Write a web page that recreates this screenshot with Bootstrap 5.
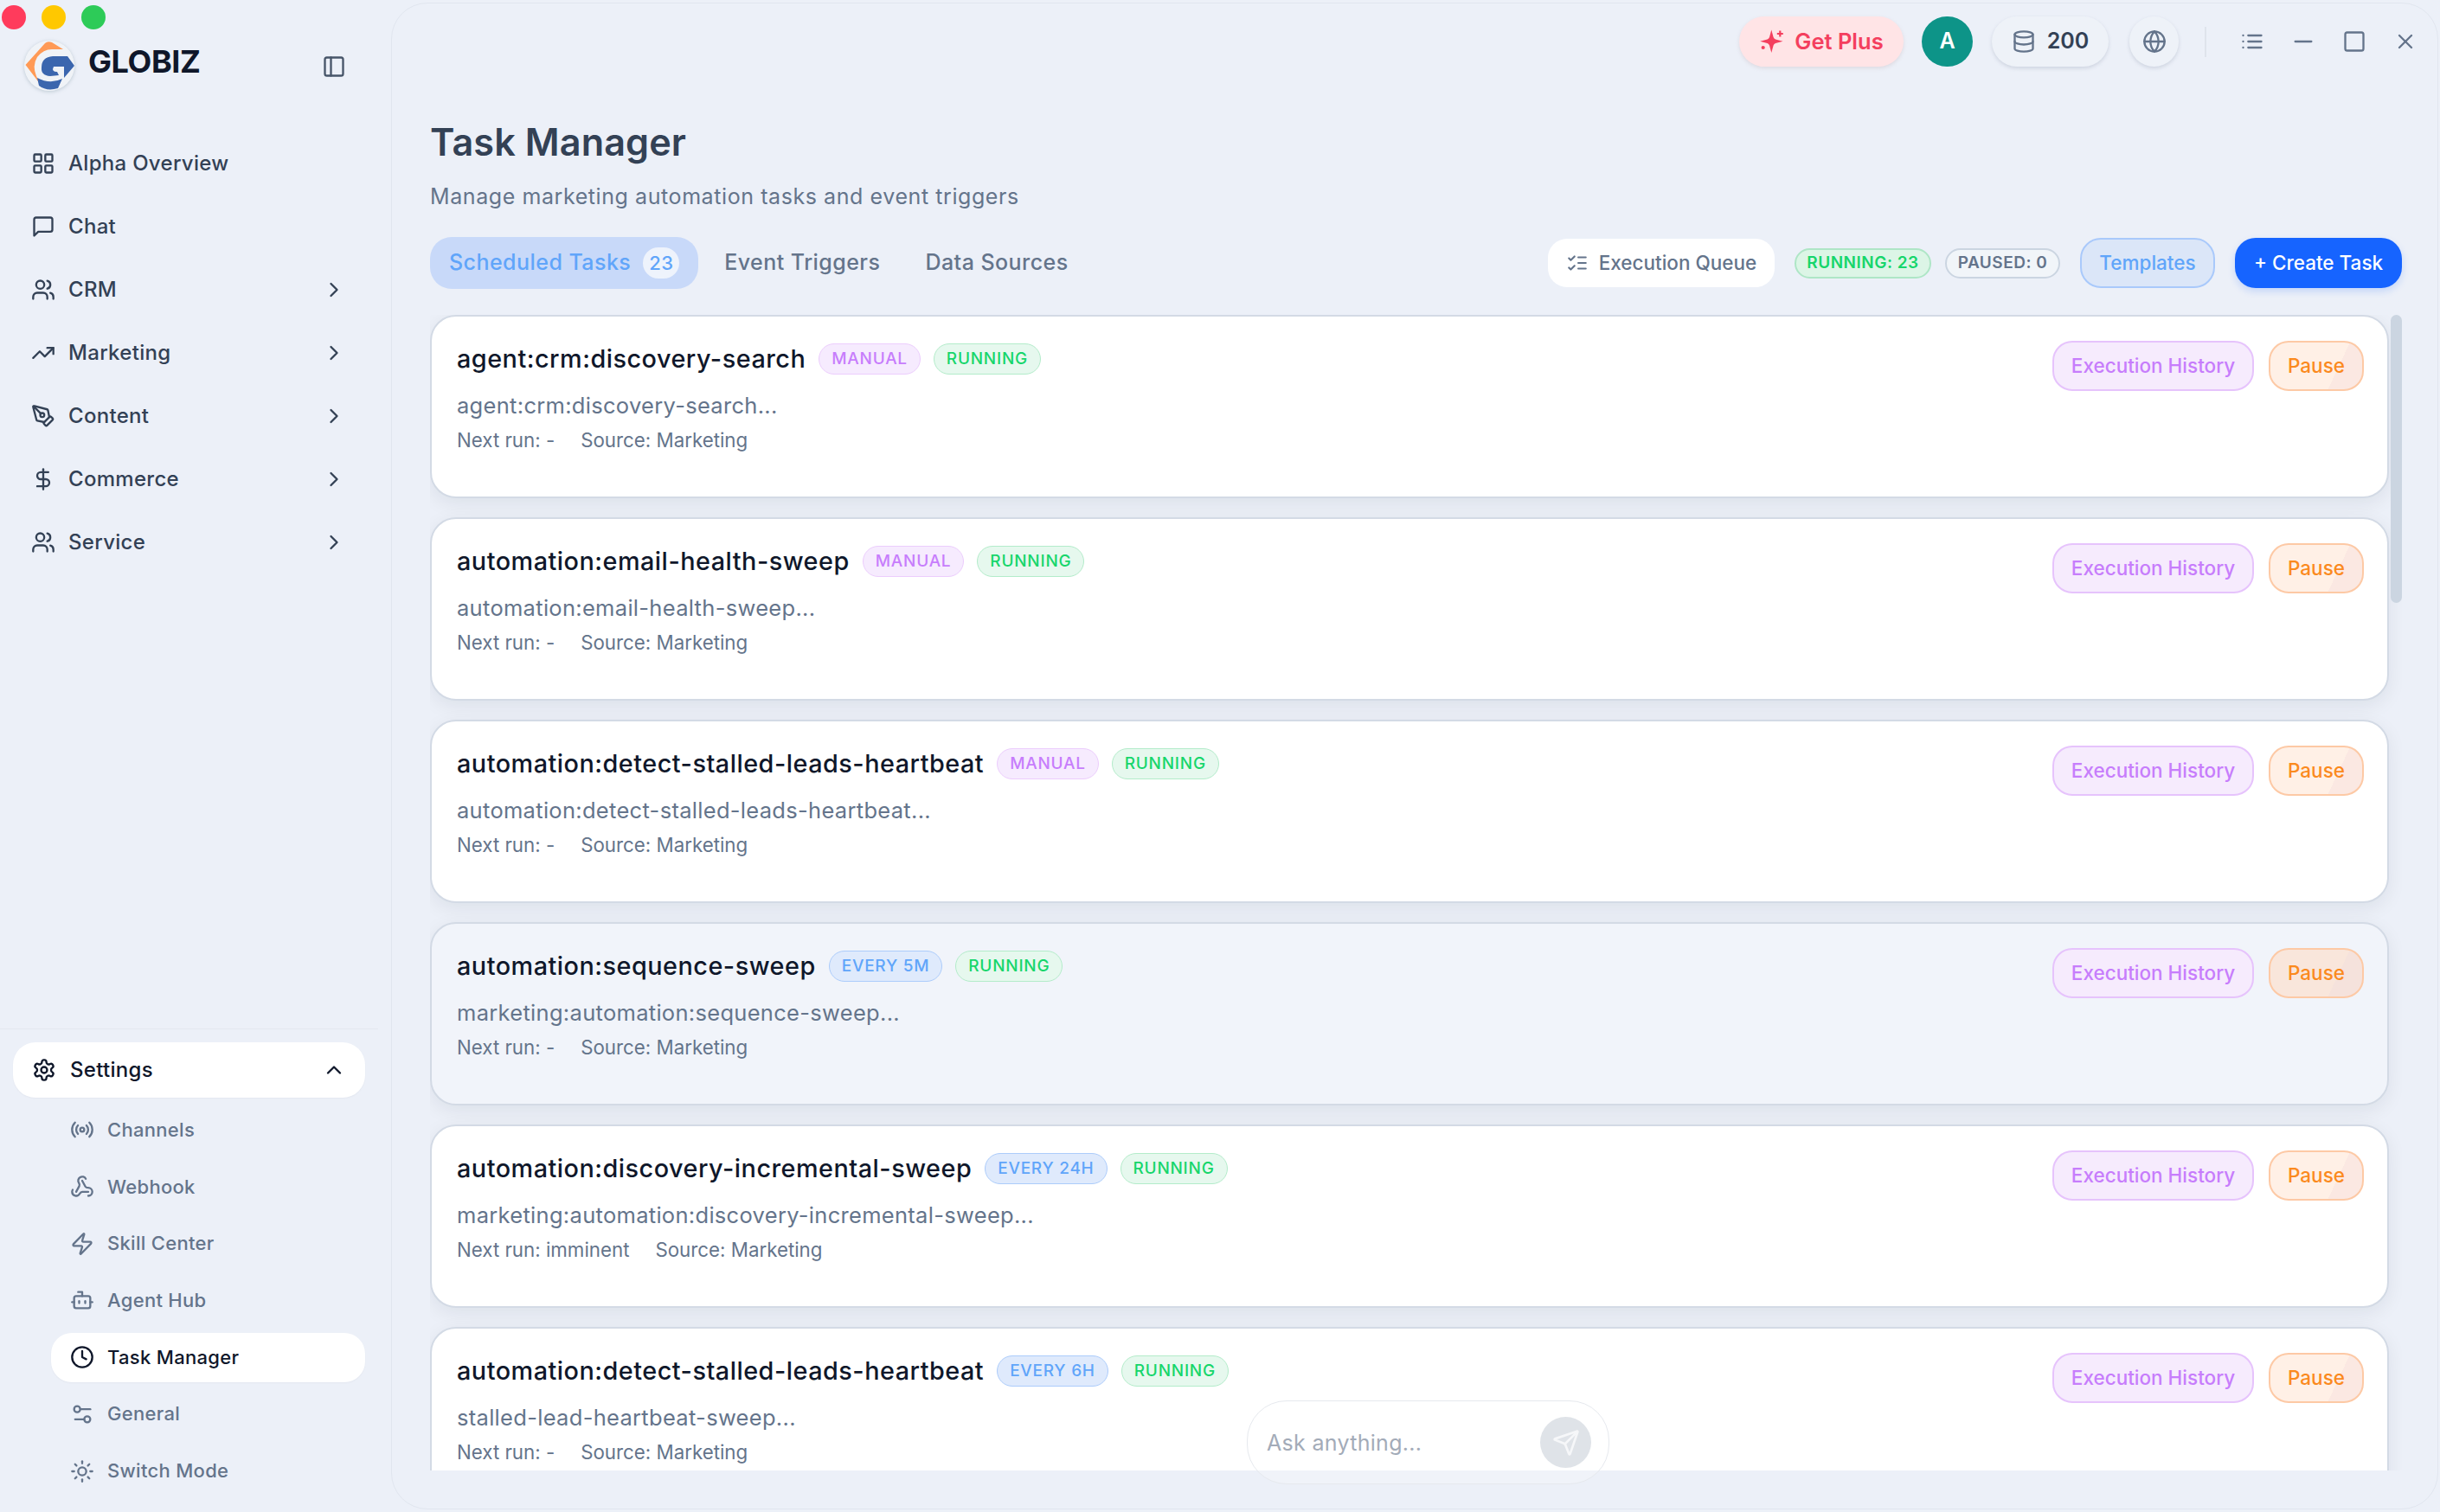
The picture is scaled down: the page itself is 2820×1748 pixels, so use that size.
<!DOCTYPE html>
<html lang="en">
<head>
  <meta charset="utf-8">
  <meta content="width=device-width, initial-scale=1.0" name="viewport">
  <title>GLOBIZ - Task Manager</title>
  <link href="https://cdn.jsdelivr.net/npm/bootstrap@5.3.3/dist/css/bootstrap.min.css" rel="stylesheet">
  <style>
    html, body { height: 100%; }
    body {
      font-family: Inter, "Liberation Sans", sans-serif;
      background-color: #ecf0f8;
      color: #0f172a;
      overflow: hidden;
    }
    svg.ico {
      width: 28px;
      height: 28px;
      flex: none;
      fill: none;
      stroke: currentColor;
      stroke-width: 2;
      stroke-linecap: round;
      stroke-linejoin: round;
    }
    .app-shell { height: 1748px; }

    /* sidebar */
    .side-col { width: 452px; flex: none; }
    .traffic { padding: 6px 0 0 2px; gap: 18px; height: 34px; }
    .traffic span { width: 28px; height: 28px; border-radius: 50%; }
    .brand-row { margin-top: 13px; padding: 0 52px 0 28px; height: 58px; }
    .brand-logo { width: 58px; height: 58px; flex: none; border-radius: 50%; box-shadow: 0 1px 4px rgba(100, 130, 140, .35); }
    .brand-name { font-size: 36px; font-weight: 700; letter-spacing: -0.4px; margin-left: 16px; margin-top: -10px; color: #0f172a; }
    .side-toggle { color: #475569; margin-left: auto; margin-top: 2px; }
    .main-nav { margin-top: 47px; }
    .main-nav a {
      height: 73px;
      padding: 0 52px 0 36px;
      gap: 15px;
      font-size: 24px;
      font-weight: 500;
      letter-spacing: 0.3px;
      color: #334155;
      text-decoration: none;
    }
    .main-nav a .ico + .ico { margin-left: auto; }
    .settings-box { border-top: 1px solid #e3e8f0; margin-right: 15px; padding-top: 15px; padding-bottom: 19px; }
    .settings-head {
      margin-left: 15px;
      margin-right: 15px;
      height: 64px;
      padding: 0 22px;
      gap: 16px;
      background: #fff;
      border-radius: 26px;
      font-size: 24px;
      font-weight: 500;
      letter-spacing: 0.3px;
      color: #0f172a;
      box-shadow: 0 1px 2px rgba(15, 23, 42, .04);
    }
    .settings-head .ico + .ico { margin-left: auto; }
    .sub-nav { margin: 8.7px 15px 0 59px; gap: 8.7px; }
    .sub-nav a {
      height: 57px;
      padding: 0 22px;
      gap: 15px;
      border-radius: 24px;
      font-size: 22px;
      font-weight: 500;
      letter-spacing: 0.3px;
      color: #64748b;
      text-decoration: none;
    }
    .sub-nav a.on { background: #fff; color: #0f172a; box-shadow: 0 1px 2px rgba(15, 23, 42, .04); }

    /* main panel */
    .panel {
      margin: 3px 2px 3px 0;
      border: 1px solid #e1e6ef;
      border-radius: 42px;
      min-width: 0;
    }
    .top-bar { height: 60px; margin-top: 15px; padding-right: 23px; }
    .pill-top {
      height: 58px;
      border-radius: 29px;
      background: #eef2f8;
      box-shadow: 0 2px 4px rgba(100, 116, 139, .22);
      font-size: 25px;
      font-weight: 600;
      color: #334155;
    }
    .pill-plus { width: 190px; margin-right: 21px; background: #ffe4e6; color: #f43f5e; gap: 11px; font-size: 25.5px; box-shadow: 0 2px 4px rgba(190, 170, 175, .3); }
    .pill-avatar { width: 59px; margin-right: 22px; background: #0d9488; color: #fff; box-shadow: none; }
    .pill-credit { width: 135px; margin-right: 24px; gap: 13px; }
    .pill-globe { width: 57px; color: #64748b; }
    .top-sep { width: 2px; height: 35px; background: #dfe4ec; margin: 0 39px 0 30px; }
    .win-btns { color: #64748b; gap: 31px; }
    .page-head { padding-left: 44px; }
    .page-title { font-size: 43.2px; line-height: 56px; font-weight: 600; letter-spacing: .1px; color: #334155; margin: 59px 0 0; }
    .page-sub { font-size: 25px; line-height: 36px; letter-spacing: .58px; color: #64748b; margin: 17px 0 0; }
    .tool-row { margin-top: 29px; padding: 0 41px 0 44px; height: 60px; }
    .tab-btn { font-size: 25px; font-weight: 500; color: #64748b; height: 60px; border-radius: 25px; letter-spacing: .45px; }
    .tab-btn.on { background: #c8d9f9; color: #60a5fa; padding: 0 22px; gap: 14px; margin-right: 30px; }
    .tab-gap { margin-right: 52px; }
    .tab-count { width: 42px; height: 36px; border-radius: 18px; background: #eef3fc; font-size: 22px; }
    .exec-queue { height: 56px; width: 262px; background: #fff; border-radius: 22px; color: #64748b; font-size: 22.5px; font-weight: 500; gap: 12px; margin-left: auto; }
    .exec-queue .ico { width: 26px; height: 26px; }
    .stat-tag { height: 35px; border-radius: 18px; font-size: 19px; font-weight: 600; letter-spacing: .5px; border: 2px solid; }
    .stat-run { width: 158px; margin-left: 23px; background: #dcf5e6; border-color: #aee6c6; color: #16d66b; }
    .stat-pause { width: 133px; margin-left: 16px; background: #f1f5f9; border-color: #cbd5e1; color: #64748b; }
    .btn.btn-tpl { height: 58px; width: 156px; margin-left: 23px; background: #dbe6f8; border: 2px solid #a9c9fb; color: #60a5fa; border-radius: 24px; font-size: 22.5px; font-weight: 500; padding: 0; }
    .btn.btn-new { height: 58px; width: 193px; margin-left: 23px; background: #1664ff; border: 0; color: #fff; border-radius: 24px; font-size: 22.5px; font-weight: 500; padding: 0; box-shadow: 0 4px 8px rgba(22, 100, 255, .18); }
    .scroll-box {
      margin: 30px 41px 44px 44px;
      padding-right: 15px;
      overflow: hidden;
      gap: 22px;
      position: relative;
    }
    .scroll-thumb { position: absolute; right: 0; top: 0; width: 13px; height: 333px; border-radius: 7px; background: #cbd5e1; }

    /* task cards */
    .card.task-card {
      height: 212px;
      flex: none;
      border: 2px solid #d3dae5;
      border-radius: 30px;
      padding: 28px 27px 0 29px;
      box-shadow: 0 6px 22px rgba(15, 23, 42, .07);
    }
    .card.task-card.hovered { background: #f1f4fa; }
    .task-top { height: 36px; margin-top: 3px; gap: 15px; }
    .task-name { font-size: 28.8px; font-weight: 500; letter-spacing: .5px; color: #0f172a; }
    .task-tag { height: 36px; border-radius: 18px; border: 1.5px solid; padding: 0 14px; font-size: 19px; font-weight: 500; letter-spacing: .75px; }
    .tag-manual { background: #f6ebfe; border-color: #eccdfd; color: #c77dfc; }
    .tag-sched { background: #dfeafc; border-color: #acccfb; color: #60a5fa; }
    .tag-run { background: #e6f8ee; border-color: #b3ecca; color: #16d66b; }
    .task-desc { font-size: 25.5px; line-height: 36px; letter-spacing: .3px; margin-top: 18px; color: #64748b; }
    .task-meta { font-size: 22.3px; line-height: 32px; margin-top: 6px; color: #64748b; gap: 30px; }
    .task-acts { gap: 17px; }
    .btn.btn-hist, .btn.btn-pause { height: 58px; border-radius: 23px; font-size: 22.5px; font-weight: 500; padding: 0; border: 2px solid; }
    .btn.btn-hist { width: 233px; background: #f6ebfd; border-color: #e6c3fc; color: #c77dfc; }
    .btn.btn-pause { width: 110px; background: linear-gradient(115deg, #fff0e6 70%, #fbe8e2 70%); border-color: #fdc9a5; color: #fb8a1e; }
    .hovered .btn.btn-pause { background: linear-gradient(115deg, #f9e6db 70%, #f5e2dc 70%); }

    /* floating ask box */
    .ask-box {
      position: absolute;
      left: 1441px;
      top: 1619px;
      width: 419px;
      height: 97px;
      border: 1.5px solid #e6e9ee;
      border-radius: 46px;
      background: rgba(255, 255, 255, .22);
      padding: 0 20px 0 22px;
    }
    .ask-text { font-size: 25px; color: #a3abb8; letter-spacing: .3px; padding-top: 2px; }
    .ask-send { width: 59px; height: 59px; border-radius: 50%; background: #dfe3e8; color: #f6f7f9; margin-left: auto; }
    .ask-send .ico { width: 32px; height: 32px; }
  </style>
</head>
<body>
  <!-- icon sprite -->
  <svg width="0" height="0" class="position-absolute">
    <symbol id="i-grid" viewBox="0 0 24 24"><rect x="3" y="3" width="7" height="7" rx="1"/><rect x="14" y="3" width="7" height="7" rx="1"/><rect x="14" y="14" width="7" height="7" rx="1"/><rect x="3" y="14" width="7" height="7" rx="1"/></symbol>
    <symbol id="i-chat" viewBox="0 0 24 24"><path d="M21 15a2 2 0 0 1-2 2H7l-4 4V5a2 2 0 0 1 2-2h14a2 2 0 0 1 2 2z"/></symbol>
    <symbol id="i-users" viewBox="0 0 24 24"><path d="M16 21v-2a4 4 0 0 0-4-4H6a4 4 0 0 0-4 4v2"/><circle cx="9" cy="7" r="4"/><path d="M22 21v-2a4 4 0 0 0-3-3.87"/><path d="M16 3.13a4 4 0 0 1 0 7.75"/></symbol>
    <symbol id="i-trend" viewBox="0 0 24 24"><polyline points="22 7 13.5 15.5 8.5 10.5 2 17"/><polyline points="16 7 22 7 22 13"/></symbol>
    <symbol id="i-pen" viewBox="0 0 24 24"><path d="M15.707 21.293a1 1 0 0 1-1.414 0l-1.586-1.586a1 1 0 0 1 0-1.414l5.586-5.586a1 1 0 0 1 1.414 0l1.586 1.586a1 1 0 0 1 0 1.414z"/><path d="m18 13-1.375-6.874a1 1 0 0 0-.746-.776L3.235 2.028a1 1 0 0 0-1.207 1.207L5.35 15.879a1 1 0 0 0 .776.746L13 18"/><path d="m2.3 2.3 7.286 7.286"/><circle cx="11" cy="11" r="2"/></symbol>
    <symbol id="i-dollar" viewBox="0 0 24 24"><line x1="12" y1="2" x2="12" y2="22"/><path d="M17 5H9.5a3.5 3.5 0 0 0 0 7h5a3.5 3.5 0 0 1 0 7H6"/></symbol>
    <symbol id="i-right" viewBox="0 0 24 24"><path d="m9 18 6-6-6-6"/></symbol>
    <symbol id="i-up" viewBox="0 0 24 24"><path d="m18 15-6-6-6 6"/></symbol>
    <symbol id="i-gear" viewBox="0 0 24 24"><path d="M12.22 2h-.44a2 2 0 0 0-2 2v.18a2 2 0 0 1-1 1.73l-.43.25a2 2 0 0 1-2 0l-.15-.08a2 2 0 0 0-2.73.73l-.22.38a2 2 0 0 0 .73 2.73l.15.1a2 2 0 0 1 1 1.72v.51a2 2 0 0 1-1 1.74l-.15.09a2 2 0 0 0-.73 2.73l.22.38a2 2 0 0 0 2.73.73l.15-.08a2 2 0 0 1 2 0l.43.25a2 2 0 0 1 1 1.73V20a2 2 0 0 0 2 2h.44a2 2 0 0 0 2-2v-.18a2 2 0 0 1 1-1.73l.43-.25a2 2 0 0 1 2 0l.15.08a2 2 0 0 0 2.73-.73l.22-.39a2 2 0 0 0-.73-2.73l-.15-.08a2 2 0 0 1-1-1.74v-.5a2 2 0 0 1 1-1.74l.15-.09a2 2 0 0 0 .73-2.73l-.22-.38a2 2 0 0 0-2.73-.73l-.15.08a2 2 0 0 1-2 0l-.43-.25a2 2 0 0 1-1-1.73V4a2 2 0 0 0-2-2z"/><circle cx="12" cy="12" r="3"/></symbol>
    <symbol id="i-radio" viewBox="0 0 24 24"><path d="M4.9 19.1C1 15.2 1 8.8 4.9 4.9"/><path d="M7.8 16.2c-2.3-2.3-2.3-6.1 0-8.5"/><circle cx="12" cy="12" r="2"/><path d="M16.2 7.8c2.3 2.3 2.3 6.1 0 8.5"/><path d="M19.1 4.9C23 8.8 23 15.1 19.1 19"/></symbol>
    <symbol id="i-hook" viewBox="0 0 24 24"><path d="M18 16.98h-5.99c-1.1 0-1.95.94-2.48 1.9A4 4 0 0 1 2 17c.01-.7.2-1.4.57-2"/><path d="m6 17 3.13-5.78c.53-.97.1-2.18-.5-3.1a4 4 0 1 1 6.89-4.06"/><path d="m12 6 3.13 5.73C15.66 12.7 16.9 13 18 13a4 4 0 0 1 0 8"/></symbol>
    <symbol id="i-zap" viewBox="0 0 24 24"><path d="M4 14a1 1 0 0 1-.78-1.63l9.9-10.2a.5.5 0 0 1 .86.46l-1.92 6.02A1 1 0 0 0 13 10h7a1 1 0 0 1 .78 1.63l-9.9 10.2a.5.5 0 0 1-.86-.46l1.92-6.02A1 1 0 0 0 11 14z"/></symbol>
    <symbol id="i-bot" viewBox="0 0 24 24"><path d="M12 8V4H8"/><rect x="4" y="8" width="16" height="12" rx="2"/><path d="M2 14h2"/><path d="M20 14h2"/><path d="M15 13v2"/><path d="M9 13v2"/></symbol>
    <symbol id="i-clock" viewBox="0 0 24 24"><circle cx="12" cy="12" r="10"/><polyline points="12 6 12 12 16 14"/></symbol>
    <symbol id="i-sliders" viewBox="0 0 24 24"><path d="M20 7h-9"/><path d="M14 17H5"/><circle cx="17" cy="17" r="3"/><circle cx="7" cy="7" r="3"/></symbol>
    <symbol id="i-sun" viewBox="0 0 24 24"><circle cx="12" cy="12" r="4"/><path d="M12 2v2"/><path d="M12 20v2"/><path d="m4.93 4.93 1.41 1.41"/><path d="m17.66 17.66 1.41 1.41"/><path d="M2 12h2"/><path d="M20 12h2"/><path d="m6.34 17.66-1.41 1.41"/><path d="m19.07 4.93-1.41 1.41"/></symbol>
    <symbol id="i-panel" viewBox="0 0 24 24"><rect x="3" y="3" width="18" height="18" rx="2"/><path d="M9 3v18"/></symbol>
    <symbol id="i-db" viewBox="0 0 24 24"><ellipse cx="12" cy="5" rx="9" ry="3"/><path d="M3 5V19A9 3 0 0 0 21 19V5"/><path d="M3 12A9 3 0 0 0 21 12"/></symbol>
    <symbol id="i-globe" viewBox="0 0 24 24"><circle cx="12" cy="12" r="10"/><path d="M12 2a14.5 14.5 0 0 0 0 20 14.5 14.5 0 0 0 0-20"/><path d="M2 12h20"/></symbol>
    <symbol id="i-list" viewBox="0 0 24 24"><path d="M8 6h13"/><path d="M8 12h13"/><path d="M8 18h13"/><path d="M3 6h.01"/><path d="M3 12h.01"/><path d="M3 18h.01"/></symbol>
    <symbol id="i-min" viewBox="0 0 24 24"><path d="M4 12h16"/></symbol>
    <symbol id="i-max" viewBox="0 0 24 24"><rect x="3" y="3" width="18" height="18" rx="2"/></symbol>
    <symbol id="i-close" viewBox="0 0 24 24"><path d="M18 6 6 18"/><path d="m6 6 12 12"/></symbol>
    <symbol id="i-checks" viewBox="0 0 24 24"><path d="m3 17 2 2 4-4"/><path d="m3 7 2 2 4-4"/><path d="M13 6h8"/><path d="M13 12h8"/><path d="M13 18h8"/></symbol>
    <symbol id="i-send" viewBox="0 0 24 24"><path d="M14.536 21.686a.5.5 0 0 0 .937-.024l6.5-19a.496.496 0 0 0-.635-.635l-19 6.5a.5.5 0 0 0-.024.937l7.93 3.18a2 2 0 0 1 1.112 1.11z"/><path d="m21.854 2.147-10.94 10.939"/></symbol>
  </svg>

  <div class="app-shell d-flex">
    <aside class="side-col d-flex flex-column">
      <div class="traffic d-flex">
        <span style="background:#ff3b5c"></span>
        <span style="background:#ffc800"></span>
        <span style="background:#2dcb58"></span>
      </div>
      <div class="brand-row d-flex align-items-center">
        <svg class="brand-logo" viewBox="0 0 58 58">
          <circle cx="29" cy="29" r="29" fill="#f0f3f7"/>
          <path d="M1.500 28 24 3 Q27 0 32 2 L45 10 L32 10 Q22 10 15 19 Q9 29 14 41 L19 51 Z" fill="#ff9a56"/>
          <path d="M20 31 Q20 19 33 18 L50 18 L58 29 L46 43 L46 30 L34 30 Q31 36 38 36 L40 40 L30 41 Q19 40 20 31Z" fill="#3b66ae"/>
          <path d="M15 43 Q30 51 44 44 L39 55 Q26 59 17 52Z" fill="#3b66ae"/>
        </svg>
        <span class="brand-name">GLOBIZ</span>
        <svg class="ico side-toggle"><use href="#i-panel"/></svg>
      </div>
      <nav class="main-nav d-flex flex-column">
        <a href="#" class="d-flex align-items-center"><svg class="ico"><use href="#i-grid"/></svg>Alpha Overview</a>
        <a href="#" class="d-flex align-items-center"><svg class="ico"><use href="#i-chat"/></svg>Chat</a>
        <a href="#" class="d-flex align-items-center"><svg class="ico"><use href="#i-users"/></svg>CRM<svg class="ico"><use href="#i-right"/></svg></a>
        <a href="#" class="d-flex align-items-center"><svg class="ico"><use href="#i-trend"/></svg>Marketing<svg class="ico"><use href="#i-right"/></svg></a>
        <a href="#" class="d-flex align-items-center"><svg class="ico"><use href="#i-pen"/></svg>Content<svg class="ico"><use href="#i-right"/></svg></a>
        <a href="#" class="d-flex align-items-center"><svg class="ico"><use href="#i-dollar"/></svg>Commerce<svg class="ico"><use href="#i-right"/></svg></a>
        <a href="#" class="d-flex align-items-center"><svg class="ico"><use href="#i-users"/></svg>Service<svg class="ico"><use href="#i-right"/></svg></a>
      </nav>
      <div class="settings-box mt-auto">
        <div class="settings-head d-flex align-items-center"><svg class="ico"><use href="#i-gear"/></svg>Settings<svg class="ico"><use href="#i-up"/></svg></div>
        <div class="sub-nav d-flex flex-column">
          <a href="#" class="d-flex align-items-center"><svg class="ico"><use href="#i-radio"/></svg>Channels</a>
          <a href="#" class="d-flex align-items-center"><svg class="ico"><use href="#i-hook"/></svg>Webhook</a>
          <a href="#" class="d-flex align-items-center"><svg class="ico"><use href="#i-zap"/></svg>Skill Center</a>
          <a href="#" class="d-flex align-items-center"><svg class="ico"><use href="#i-bot"/></svg>Agent Hub</a>
          <a href="#" class="on d-flex align-items-center"><svg class="ico"><use href="#i-clock"/></svg>Task Manager</a>
          <a href="#" class="d-flex align-items-center"><svg class="ico"><use href="#i-sliders"/></svg>General</a>
          <a href="#" class="d-flex align-items-center"><svg class="ico"><use href="#i-sun"/></svg>Switch Mode</a>
        </div>
      </div>
    </aside>

    <main class="panel flex-grow-1 d-flex flex-column">
      <div class="top-bar d-flex align-items-center justify-content-end">
        <div class="pill-top pill-plus d-flex align-items-center justify-content-center">
          <svg width="30" height="30" viewBox="0 0 30 30" fill="currentColor"><path d="M14.300 1.500 16.600 10 Q17.200 11.800 19 12.400 L27.500 14.700 19 17 Q17.200 17.600 16.600 19.400 L14.300 28 12 19.400 Q11.400 17.600 9.600 17 L1.200 14.700 9.600 12.400 Q11.400 11.800 12 10Z"/><path d="M23.200 2.500h2.200v2.400h2.400v2.200h-2.400v2.400h-2.200V7.100h-2.400V4.900h2.400Z"/><circle cx="4.700" cy="22" r="2.100"/></svg>
          Get Plus
        </div>
        <div class="pill-top pill-avatar d-flex align-items-center justify-content-center">A</div>
        <div class="pill-top pill-credit d-flex align-items-center justify-content-center"><svg class="ico" style="color:#64748b"><use href="#i-db"/></svg>200</div>
        <div class="pill-top pill-globe d-flex align-items-center justify-content-center"><svg class="ico"><use href="#i-globe"/></svg></div>
        <div class="top-sep"></div>
        <div class="win-btns d-flex align-items-center">
          <svg class="ico"><use href="#i-list"/></svg>
          <svg class="ico"><use href="#i-min"/></svg>
          <svg class="ico"><use href="#i-max"/></svg>
          <svg class="ico"><use href="#i-close"/></svg>
        </div>
      </div>

      <div class="page-head">
        <h1 class="page-title">Task Manager</h1>
        <p class="page-sub">Manage marketing automation tasks and event triggers</p>
      </div>

      <div class="tool-row d-flex align-items-center">
        <div class="tab-btn on d-flex align-items-center">Scheduled Tasks <span class="tab-count d-flex align-items-center justify-content-center">23</span></div>
        <div class="tab-btn tab-gap d-flex align-items-center">Event Triggers</div>
        <div class="tab-btn d-flex align-items-center">Data Sources</div>
        <div class="exec-queue d-flex align-items-center justify-content-center"><svg class="ico"><use href="#i-checks"/></svg>Execution Queue</div>
        <span class="stat-tag stat-run d-flex align-items-center justify-content-center">RUNNING: 23</span>
        <span class="stat-tag stat-pause d-flex align-items-center justify-content-center">PAUSED: 0</span>
        <button class="btn btn-tpl">Templates</button>
        <button class="btn btn-new">+ Create Task</button>
      </div>

      <div id="task-list" class="scroll-box flex-grow-1 d-flex flex-column">
        <div class="scroll-thumb"></div>
      </div>
    </main>
  </div>

  <div class="ask-box d-flex align-items-center">
    <span class="ask-text">Ask anything...</span>
    <div class="ask-send d-flex align-items-center justify-content-center"><svg class="ico"><use href="#i-send"/></svg></div>
  </div>

  <script src="https://cdn.jsdelivr.net/npm/bootstrap@5.3.3/dist/js/bootstrap.bundle.min.js"></script>
  <script>
    const tasks = [
      { name: "agent:crm:discovery-search", tag: "MANUAL", desc: "agent:crm:discovery-search...", next: "-" },
      { name: "automation:email-health-sweep", tag: "MANUAL", desc: "automation:email-health-sweep...", next: "-" },
      { name: "automation:detect-stalled-leads-heartbeat", tag: "MANUAL", desc: "automation:detect-stalled-leads-heartbeat...", next: "-" },
      { name: "automation:sequence-sweep", tag: "EVERY 5M", desc: "marketing:automation:sequence-sweep...", next: "-", hovered: true },
      { name: "automation:discovery-incremental-sweep", tag: "EVERY 24H", desc: "marketing:automation:discovery-incremental-sweep...", next: "imminent" },
      { name: "automation:detect-stalled-leads-heartbeat", tag: "EVERY 6H", desc: "stalled-lead-heartbeat-sweep...", next: "-" }
    ];

    const list = document.getElementById("task-list");
    tasks.forEach(t => {
      const card = document.createElement("div");
      card.className = "card task-card flex-row justify-content-between" + (t.hovered ? " hovered" : "");
      card.innerHTML = `
        <div>
          <div class="task-top d-flex align-items-center">
            <span class="task-name">${t.name}</span>
            <span class="task-tag ${t.tag === "MANUAL" ? "tag-manual" : "tag-sched"} d-flex align-items-center">${t.tag}</span>
            <span class="task-tag tag-run d-flex align-items-center">RUNNING</span>
          </div>
          <div class="task-desc">${t.desc}</div>
          <div class="task-meta d-flex"><span>Next run: ${t.next}</span><span>Source: Marketing</span></div>
        </div>
        <div class="task-acts d-flex align-items-start">
          <button class="btn btn-hist">Execution History</button>
          <button class="btn btn-pause">Pause</button>
        </div>`;
      list.insertBefore(card, list.lastElementChild);
    });
  </script>
</body>
</html>
